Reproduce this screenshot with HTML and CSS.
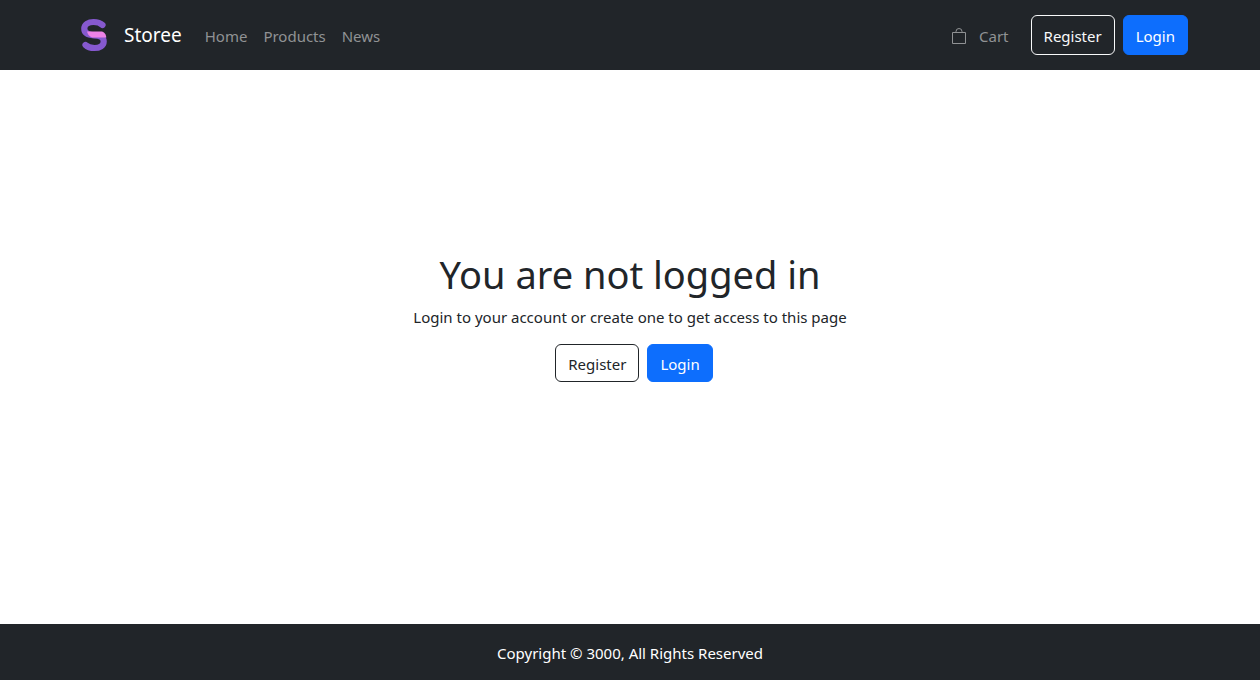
FILE: index.html
```html
<!DOCTYPE html>
<html lang="en">
<head>
<meta charset="utf-8">
<meta name="viewport" content="width=device-width, initial-scale=1">
<title>Storee</title>
<link rel="stylesheet" href="styles.css">
</head>
<body>
<header class="navbar">
  <div class="container">
    <a class="brand" href="#">
      <svg class="logo" viewBox="0 0 44 42" aria-hidden="true">
        <path d="M30.500 12C28.500 10 25.500 9 21.500 9C16.500 9 12.300 11.500 12.300 15.800C12.300 21 17 22 22 22.300C27.500 22.600 31.700 23.500 31.700 28.500C31.700 32.700 27.500 35 22.500 35C18.500 35 15.500 34 13.500 32" fill="none" stroke="#8659cf" stroke-width="6.200" stroke-linecap="round"/>
        <path d="M15 18.500H29C32 18.500 34 21 34.300 24.500H21.500C18 24.500 16 22 15 18.500Z" fill="#ec82e6"/>
      </svg>
      <span>Storee</span>
    </a>
    <nav class="links">
      <a href="#">Home</a>
      <a href="#">Products</a>
      <a href="#">News</a>
    </nav>
    <div class="actions">
      <a class="cart" href="#">
        <svg class="bag" viewBox="0 0 16 16" fill="none" stroke="currentColor" aria-hidden="true">
          <path d="M1.500 4.500H14.500V15.500H1.500ZM5 4.500V3.500A3 3 0 0 1 11 3.500V4.500"/>
        </svg>
        <span>Cart</span>
      </a>
      <button class="btn btn-light" type="button">Register</button>
      <button class="btn btn-primary" type="button">Login</button>
    </div>
  </div>
</header>
<main class="main">
  <h1 class="title">You are not logged in</h1>
  <p class="lead">Login to your account or create one to get access to this page</p>
  <div class="choices">
    <button class="btn btn-dark" type="button">Register</button>
    <button class="btn btn-primary" type="button">Login</button>
  </div>
</main>
<footer class="footer">Copyright © 3000, All Rights Reserved</footer>
</body>
</html>
```
FILE: styles.css
```css
* { box-sizing: border-box; }
body {
  margin: 0;
  min-height: 100vh;
  display: flex;
  flex-direction: column;
  font-family: "Segoe UI", "Noto Sans", "Open Sans", sans-serif;
  font-size: 15px;
  line-height: 24px;
  color: #212529;
  background: #fff;
}
a { color: inherit; text-decoration: none; }
.navbar { background: #212529; padding: 13px 0 15px; }
.container {
  display: flex;
  align-items: center;
  max-width: 1140px;
  margin: 0 auto;
  padding: 0 12px;
}
.brand {
  display: flex;
  align-items: center;
  gap: 8px;
  margin-right: 23px;
  font-size: 19px;
  color: #fff;
}
.brand span { padding-top: 2px; }
.logo { width: 44px; height: 42px; }
.links { display: flex; gap: 16px; padding-top: 3px; color: #909294; }
.actions { display: flex; align-items: stretch; gap: 8px; margin-left: auto; padding-top: 2px; }
.cart {
  display: flex;
  align-items: center;
  gap: 12px;
  margin-right: 14px;
  padding-top: 2px;
  color: #909294;
}
.bag { width: 16px; height: 16px; }
.btn {
  font: inherit;
  padding: 7px 12px 5px;
  border: 1px solid transparent;
  border-radius: 6px;
  background: transparent;
  cursor: pointer;
}
.navbar .btn { padding: 8px 12px 6px; }
.btn-light { border-color: #f8f9fa; color: #f8f9fa; }
.btn-dark { border-color: #212529; color: #212529; }
.btn-primary { border-color: #0d6efd; background: #0d6efd; color: #fff; }
.main {
  flex: 1;
  display: flex;
  flex-direction: column;
  align-items: center;
  justify-content: center;
  padding-bottom: 61px;
}
.title { margin: 0 0 8px; font-size: 38px; line-height: 46px; font-weight: 400; }
.lead { margin: 0 0 15px; }
.choices { display: flex; gap: 8px; padding-left: 8px; }
.footer { padding: 17px 12px 15px; text-align: center; background: #212529; color: #fff; }
```
